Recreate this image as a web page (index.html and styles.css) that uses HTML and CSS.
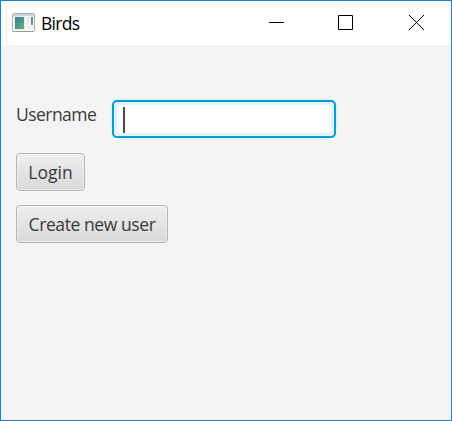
FILE: index.html
```
<!DOCTYPE html>
<html lang="en"><head><meta charset="utf-8"><title>Birds</title><link rel="stylesheet" href="styles.css"></head>
<body>
<div class="window">
<header class="titlebar">
<svg class="app-icon" width="24" height="20" viewBox="0 0 24 20"><defs><linearGradient id="screen" x1="0" y1="0" x2=".6" y2="1"><stop offset="0" stop-color="#3f78a6"/><stop offset="1" stop-color="#57b075"/></linearGradient></defs><rect x=".5" y=".5" width="22" height="18" rx="1" fill="#fafafa" stroke="#a9adb0"/><path d="M1 1h21v2H1z" fill="#cdd3dc"/><path d="M1 18.500h21" stroke="#949899"/><rect x="2.500" y="3.500" width="10" height="13" fill="#d5dcda"/><rect x="3" y="4" width="9" height="12" fill="url(#screen)"/><path d="M14 4h4v8h-4zM14 13h7v3h-7z" fill="#eeeeee"/><rect x="19" y="4" width="2" height="8" fill="url(#screen)"/></svg>
<span class="title">Birds</span>
<svg class="controls" width="160" height="20" viewBox="0 0 160 20" fill="none" stroke="#000"><path d="M1 9.500h15M70.500 2.500h14v14h-14zM141 2l15 15M156 2l-15 15"/></svg>
</header>
<main class="content">
<div class="row"><span class="label">Username</span><div class="field"><span class="caret"></span></div></div>
<button class="button login">Login</button>
<button class="button create">Create new user</button>
</main>
</div>
</body></html>
```
FILE: styles.css
```
* { box-sizing: border-box; }
body { margin: 0; font-family: "Open Sans", sans-serif; }
.window { width: 452px; height: 421px; border: 1px solid #1a80d4; background: #f4f4f4; }
.titlebar { height: 44px; background: #fff; display: flex; align-items: center; padding: 0 23px 0 11px; }
.app-icon { margin-top: -1px; }
.title { font-size: 17.5px; letter-spacing: -.7px; margin-left: 5px; color: #000; }
.controls { margin-left: auto; }
.content { padding: 55px 15px; display: flex; flex-direction: column; align-items: flex-start; }
.row { display: flex; }
.label { width: 96px; font-size: 17.5px; letter-spacing: -.55px; line-height: 28px; color: #3a3a3a; }
.field { width: 224px; height: 38px; border: 2px solid #039ed3; border-radius: 5px; background: #fff; box-shadow: 0 0 2px #9bd9ee, inset 0 0 0 3px #dff3fa; padding: 5px 9px; }
.caret { display: block; width: 2px; height: 26px; background: #4a4a4a; }
.button { height: 38px; border: 1.5px solid #b5b5b5; border-radius: 4px; background: linear-gradient(#eee, #d9d9d9) padding-box; box-shadow: inset 0 0 0 1px #ffffff66; font: 17.5px "Open Sans", sans-serif; letter-spacing: -.42px; color: #3a3a3a; padding: 0; }
.login { width: 69px; margin-top: 15px; letter-spacing: 0; }
.create { width: 152px; margin-top: 14px; }
```
